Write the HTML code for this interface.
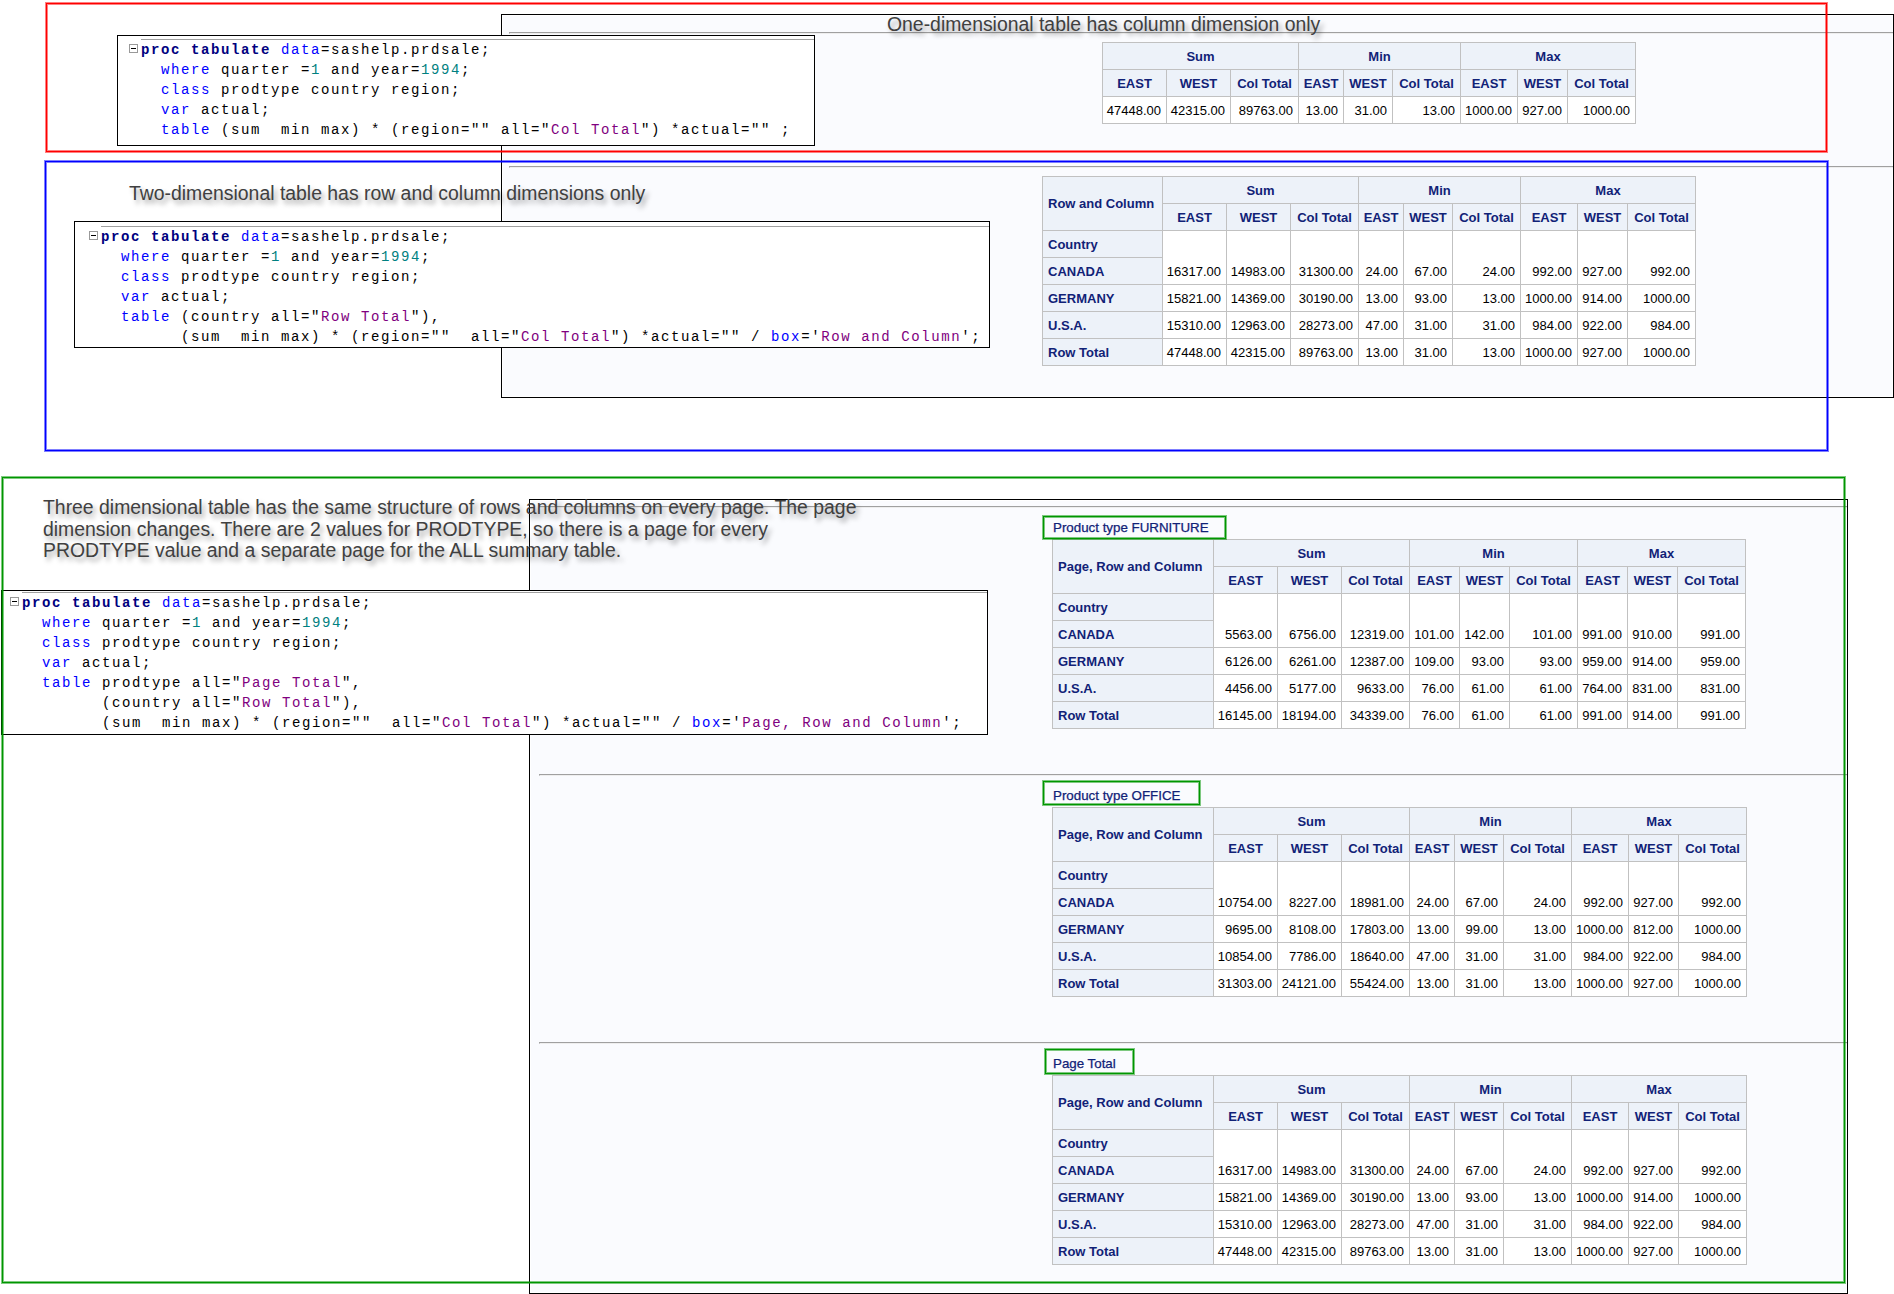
<!DOCTYPE html><html><head><meta charset="utf-8"><style>html,body{margin:0;padding:0;background:#fff;}body{width:1894px;height:1294px;position:relative;overflow:hidden;font-family:"Liberation Sans",sans-serif;font-size:13px;}.win{position:absolute;border:1px solid #000;background:#fafbfe;box-shadow:inset 0 0 0 1px #fff;}.hr{position:absolute;height:0;border-top:1px solid #a0a0a0;border-left:1px solid #a0a0a0;border-bottom:1px solid #eeeeee;}.callout{position:absolute;font-family:"Liberation Sans",sans-serif;font-size:19.4px;color:#404040;white-space:pre;text-shadow:3px 4px 5px rgba(0,0,0,0.38);line-height:21.5px;z-index:20}</style></head><body>
<div class="win" style="left:501px;top:14px;width:1391px;height:382px;z-index:1"></div>
<div class="hr" style="left:509px;top:32px;width:1383px;z-index:2"></div>
<div class="hr" style="left:509px;top:166px;width:1383px;z-index:2"></div>
<div class="callout" style="left:887px;top:12px;line-height:24px">One-dimensional table has column dimension only</div>
<div style="position:absolute;left:1102px;top:42px;width:197px;height:28px;box-sizing:border-box;border:1px solid #c1c1c1;background:#edf2f9;color:#112277;font-weight:bold;display:flex;justify-content:center;align-items:center;z-index:3"><span style="white-space:pre">Sum</span></div>
<div style="position:absolute;left:1102px;top:69px;width:65px;height:28px;box-sizing:border-box;border:1px solid #c1c1c1;background:#edf2f9;color:#112277;font-weight:bold;display:flex;justify-content:center;align-items:center;z-index:3"><span style="white-space:pre">EAST</span></div>
<div style="position:absolute;left:1166px;top:69px;width:65px;height:28px;box-sizing:border-box;border:1px solid #c1c1c1;background:#edf2f9;color:#112277;font-weight:bold;display:flex;justify-content:center;align-items:center;z-index:3"><span style="white-space:pre">WEST</span></div>
<div style="position:absolute;left:1230px;top:69px;width:69px;height:28px;box-sizing:border-box;border:1px solid #c1c1c1;background:#edf2f9;color:#112277;font-weight:bold;display:flex;justify-content:center;align-items:center;z-index:3"><span style="white-space:pre">Col Total</span></div>
<div style="position:absolute;left:1298px;top:42px;width:163px;height:28px;box-sizing:border-box;border:1px solid #c1c1c1;background:#edf2f9;color:#112277;font-weight:bold;display:flex;justify-content:center;align-items:center;z-index:3"><span style="white-space:pre">Min</span></div>
<div style="position:absolute;left:1298px;top:69px;width:46px;height:28px;box-sizing:border-box;border:1px solid #c1c1c1;background:#edf2f9;color:#112277;font-weight:bold;display:flex;justify-content:center;align-items:center;z-index:3"><span style="white-space:pre">EAST</span></div>
<div style="position:absolute;left:1343px;top:69px;width:50px;height:28px;box-sizing:border-box;border:1px solid #c1c1c1;background:#edf2f9;color:#112277;font-weight:bold;display:flex;justify-content:center;align-items:center;z-index:3"><span style="white-space:pre">WEST</span></div>
<div style="position:absolute;left:1392px;top:69px;width:69px;height:28px;box-sizing:border-box;border:1px solid #c1c1c1;background:#edf2f9;color:#112277;font-weight:bold;display:flex;justify-content:center;align-items:center;z-index:3"><span style="white-space:pre">Col Total</span></div>
<div style="position:absolute;left:1460px;top:42px;width:176px;height:28px;box-sizing:border-box;border:1px solid #c1c1c1;background:#edf2f9;color:#112277;font-weight:bold;display:flex;justify-content:center;align-items:center;z-index:3"><span style="white-space:pre">Max</span></div>
<div style="position:absolute;left:1460px;top:69px;width:58px;height:28px;box-sizing:border-box;border:1px solid #c1c1c1;background:#edf2f9;color:#112277;font-weight:bold;display:flex;justify-content:center;align-items:center;z-index:3"><span style="white-space:pre">EAST</span></div>
<div style="position:absolute;left:1517px;top:69px;width:51px;height:28px;box-sizing:border-box;border:1px solid #c1c1c1;background:#edf2f9;color:#112277;font-weight:bold;display:flex;justify-content:center;align-items:center;z-index:3"><span style="white-space:pre">WEST</span></div>
<div style="position:absolute;left:1567px;top:69px;width:69px;height:28px;box-sizing:border-box;border:1px solid #c1c1c1;background:#edf2f9;color:#112277;font-weight:bold;display:flex;justify-content:center;align-items:center;z-index:3"><span style="white-space:pre">Col Total</span></div>
<div style="position:absolute;left:1102px;top:96px;width:65px;height:28px;box-sizing:border-box;border:1px solid #c1c1c1;background:#ffffff;color:#000000;font-weight:normal;display:flex;justify-content:flex-end;align-items:center;padding-right:5px;z-index:3"><span style="white-space:pre">47448.00</span></div>
<div style="position:absolute;left:1166px;top:96px;width:65px;height:28px;box-sizing:border-box;border:1px solid #c1c1c1;background:#ffffff;color:#000000;font-weight:normal;display:flex;justify-content:flex-end;align-items:center;padding-right:5px;z-index:3"><span style="white-space:pre">42315.00</span></div>
<div style="position:absolute;left:1230px;top:96px;width:69px;height:28px;box-sizing:border-box;border:1px solid #c1c1c1;background:#ffffff;color:#000000;font-weight:normal;display:flex;justify-content:flex-end;align-items:center;padding-right:5px;z-index:3"><span style="white-space:pre">89763.00</span></div>
<div style="position:absolute;left:1298px;top:96px;width:46px;height:28px;box-sizing:border-box;border:1px solid #c1c1c1;background:#ffffff;color:#000000;font-weight:normal;display:flex;justify-content:flex-end;align-items:center;padding-right:5px;z-index:3"><span style="white-space:pre">13.00</span></div>
<div style="position:absolute;left:1343px;top:96px;width:50px;height:28px;box-sizing:border-box;border:1px solid #c1c1c1;background:#ffffff;color:#000000;font-weight:normal;display:flex;justify-content:flex-end;align-items:center;padding-right:5px;z-index:3"><span style="white-space:pre">31.00</span></div>
<div style="position:absolute;left:1392px;top:96px;width:69px;height:28px;box-sizing:border-box;border:1px solid #c1c1c1;background:#ffffff;color:#000000;font-weight:normal;display:flex;justify-content:flex-end;align-items:center;padding-right:5px;z-index:3"><span style="white-space:pre">13.00</span></div>
<div style="position:absolute;left:1460px;top:96px;width:58px;height:28px;box-sizing:border-box;border:1px solid #c1c1c1;background:#ffffff;color:#000000;font-weight:normal;display:flex;justify-content:flex-end;align-items:center;padding-right:5px;z-index:3"><span style="white-space:pre">1000.00</span></div>
<div style="position:absolute;left:1517px;top:96px;width:51px;height:28px;box-sizing:border-box;border:1px solid #c1c1c1;background:#ffffff;color:#000000;font-weight:normal;display:flex;justify-content:flex-end;align-items:center;padding-right:5px;z-index:3"><span style="white-space:pre">927.00</span></div>
<div style="position:absolute;left:1567px;top:96px;width:69px;height:28px;box-sizing:border-box;border:1px solid #c1c1c1;background:#ffffff;color:#000000;font-weight:normal;display:flex;justify-content:flex-end;align-items:center;padding-right:5px;z-index:3"><span style="white-space:pre">1000.00</span></div>
<div style="position:absolute;left:1042px;top:176px;width:121px;height:55px;box-sizing:border-box;border:1px solid #c1c1c1;background:#edf2f9;color:#112277;font-weight:bold;display:flex;justify-content:flex-start;align-items:center;padding-left:5px;z-index:3"><span style="white-space:pre">Row and Column</span></div>
<div style="position:absolute;left:1162px;top:176px;width:197px;height:28px;box-sizing:border-box;border:1px solid #c1c1c1;background:#edf2f9;color:#112277;font-weight:bold;display:flex;justify-content:center;align-items:center;z-index:3"><span style="white-space:pre">Sum</span></div>
<div style="position:absolute;left:1162px;top:203px;width:65px;height:28px;box-sizing:border-box;border:1px solid #c1c1c1;background:#edf2f9;color:#112277;font-weight:bold;display:flex;justify-content:center;align-items:center;z-index:3"><span style="white-space:pre">EAST</span></div>
<div style="position:absolute;left:1226px;top:203px;width:65px;height:28px;box-sizing:border-box;border:1px solid #c1c1c1;background:#edf2f9;color:#112277;font-weight:bold;display:flex;justify-content:center;align-items:center;z-index:3"><span style="white-space:pre">WEST</span></div>
<div style="position:absolute;left:1290px;top:203px;width:69px;height:28px;box-sizing:border-box;border:1px solid #c1c1c1;background:#edf2f9;color:#112277;font-weight:bold;display:flex;justify-content:center;align-items:center;z-index:3"><span style="white-space:pre">Col Total</span></div>
<div style="position:absolute;left:1358px;top:176px;width:163px;height:28px;box-sizing:border-box;border:1px solid #c1c1c1;background:#edf2f9;color:#112277;font-weight:bold;display:flex;justify-content:center;align-items:center;z-index:3"><span style="white-space:pre">Min</span></div>
<div style="position:absolute;left:1358px;top:203px;width:46px;height:28px;box-sizing:border-box;border:1px solid #c1c1c1;background:#edf2f9;color:#112277;font-weight:bold;display:flex;justify-content:center;align-items:center;z-index:3"><span style="white-space:pre">EAST</span></div>
<div style="position:absolute;left:1403px;top:203px;width:50px;height:28px;box-sizing:border-box;border:1px solid #c1c1c1;background:#edf2f9;color:#112277;font-weight:bold;display:flex;justify-content:center;align-items:center;z-index:3"><span style="white-space:pre">WEST</span></div>
<div style="position:absolute;left:1452px;top:203px;width:69px;height:28px;box-sizing:border-box;border:1px solid #c1c1c1;background:#edf2f9;color:#112277;font-weight:bold;display:flex;justify-content:center;align-items:center;z-index:3"><span style="white-space:pre">Col Total</span></div>
<div style="position:absolute;left:1520px;top:176px;width:176px;height:28px;box-sizing:border-box;border:1px solid #c1c1c1;background:#edf2f9;color:#112277;font-weight:bold;display:flex;justify-content:center;align-items:center;z-index:3"><span style="white-space:pre">Max</span></div>
<div style="position:absolute;left:1520px;top:203px;width:58px;height:28px;box-sizing:border-box;border:1px solid #c1c1c1;background:#edf2f9;color:#112277;font-weight:bold;display:flex;justify-content:center;align-items:center;z-index:3"><span style="white-space:pre">EAST</span></div>
<div style="position:absolute;left:1577px;top:203px;width:51px;height:28px;box-sizing:border-box;border:1px solid #c1c1c1;background:#edf2f9;color:#112277;font-weight:bold;display:flex;justify-content:center;align-items:center;z-index:3"><span style="white-space:pre">WEST</span></div>
<div style="position:absolute;left:1627px;top:203px;width:69px;height:28px;box-sizing:border-box;border:1px solid #c1c1c1;background:#edf2f9;color:#112277;font-weight:bold;display:flex;justify-content:center;align-items:center;z-index:3"><span style="white-space:pre">Col Total</span></div>
<div style="position:absolute;left:1042px;top:230px;width:121px;height:28px;box-sizing:border-box;border:1px solid #c1c1c1;background:#edf2f9;color:#112277;font-weight:bold;display:flex;justify-content:flex-start;align-items:center;padding-left:5px;z-index:3"><span style="white-space:pre">Country</span></div>
<div style="position:absolute;left:1042px;top:257px;width:121px;height:28px;box-sizing:border-box;border:1px solid #c1c1c1;background:#edf2f9;color:#112277;font-weight:bold;display:flex;justify-content:flex-start;align-items:center;padding-left:5px;z-index:3"><span style="white-space:pre">CANADA</span></div>
<div style="position:absolute;left:1042px;top:284px;width:121px;height:28px;box-sizing:border-box;border:1px solid #c1c1c1;background:#edf2f9;color:#112277;font-weight:bold;display:flex;justify-content:flex-start;align-items:center;padding-left:5px;z-index:3"><span style="white-space:pre">GERMANY</span></div>
<div style="position:absolute;left:1042px;top:311px;width:121px;height:28px;box-sizing:border-box;border:1px solid #c1c1c1;background:#edf2f9;color:#112277;font-weight:bold;display:flex;justify-content:flex-start;align-items:center;padding-left:5px;z-index:3"><span style="white-space:pre">U.S.A.</span></div>
<div style="position:absolute;left:1042px;top:338px;width:121px;height:28px;box-sizing:border-box;border:1px solid #c1c1c1;background:#edf2f9;color:#112277;font-weight:bold;display:flex;justify-content:flex-start;align-items:center;padding-left:5px;z-index:3"><span style="white-space:pre">Row Total</span></div>
<div style="position:absolute;left:1162px;top:230px;width:65px;height:55px;box-sizing:border-box;border:1px solid #c1c1c1;background:#ffffff;color:#000000;font-weight:normal;display:flex;justify-content:flex-end;align-items:flex-end;padding-bottom:5px;padding-right:5px;z-index:3"><span style="white-space:pre">16317.00</span></div>
<div style="position:absolute;left:1226px;top:230px;width:65px;height:55px;box-sizing:border-box;border:1px solid #c1c1c1;background:#ffffff;color:#000000;font-weight:normal;display:flex;justify-content:flex-end;align-items:flex-end;padding-bottom:5px;padding-right:5px;z-index:3"><span style="white-space:pre">14983.00</span></div>
<div style="position:absolute;left:1290px;top:230px;width:69px;height:55px;box-sizing:border-box;border:1px solid #c1c1c1;background:#ffffff;color:#000000;font-weight:normal;display:flex;justify-content:flex-end;align-items:flex-end;padding-bottom:5px;padding-right:5px;z-index:3"><span style="white-space:pre">31300.00</span></div>
<div style="position:absolute;left:1358px;top:230px;width:46px;height:55px;box-sizing:border-box;border:1px solid #c1c1c1;background:#ffffff;color:#000000;font-weight:normal;display:flex;justify-content:flex-end;align-items:flex-end;padding-bottom:5px;padding-right:5px;z-index:3"><span style="white-space:pre">24.00</span></div>
<div style="position:absolute;left:1403px;top:230px;width:50px;height:55px;box-sizing:border-box;border:1px solid #c1c1c1;background:#ffffff;color:#000000;font-weight:normal;display:flex;justify-content:flex-end;align-items:flex-end;padding-bottom:5px;padding-right:5px;z-index:3"><span style="white-space:pre">67.00</span></div>
<div style="position:absolute;left:1452px;top:230px;width:69px;height:55px;box-sizing:border-box;border:1px solid #c1c1c1;background:#ffffff;color:#000000;font-weight:normal;display:flex;justify-content:flex-end;align-items:flex-end;padding-bottom:5px;padding-right:5px;z-index:3"><span style="white-space:pre">24.00</span></div>
<div style="position:absolute;left:1520px;top:230px;width:58px;height:55px;box-sizing:border-box;border:1px solid #c1c1c1;background:#ffffff;color:#000000;font-weight:normal;display:flex;justify-content:flex-end;align-items:flex-end;padding-bottom:5px;padding-right:5px;z-index:3"><span style="white-space:pre">992.00</span></div>
<div style="position:absolute;left:1577px;top:230px;width:51px;height:55px;box-sizing:border-box;border:1px solid #c1c1c1;background:#ffffff;color:#000000;font-weight:normal;display:flex;justify-content:flex-end;align-items:flex-end;padding-bottom:5px;padding-right:5px;z-index:3"><span style="white-space:pre">927.00</span></div>
<div style="position:absolute;left:1627px;top:230px;width:69px;height:55px;box-sizing:border-box;border:1px solid #c1c1c1;background:#ffffff;color:#000000;font-weight:normal;display:flex;justify-content:flex-end;align-items:flex-end;padding-bottom:5px;padding-right:5px;z-index:3"><span style="white-space:pre">992.00</span></div>
<div style="position:absolute;left:1162px;top:284px;width:65px;height:28px;box-sizing:border-box;border:1px solid #c1c1c1;background:#ffffff;color:#000000;font-weight:normal;display:flex;justify-content:flex-end;align-items:center;padding-right:5px;z-index:3"><span style="white-space:pre">15821.00</span></div>
<div style="position:absolute;left:1226px;top:284px;width:65px;height:28px;box-sizing:border-box;border:1px solid #c1c1c1;background:#ffffff;color:#000000;font-weight:normal;display:flex;justify-content:flex-end;align-items:center;padding-right:5px;z-index:3"><span style="white-space:pre">14369.00</span></div>
<div style="position:absolute;left:1290px;top:284px;width:69px;height:28px;box-sizing:border-box;border:1px solid #c1c1c1;background:#ffffff;color:#000000;font-weight:normal;display:flex;justify-content:flex-end;align-items:center;padding-right:5px;z-index:3"><span style="white-space:pre">30190.00</span></div>
<div style="position:absolute;left:1358px;top:284px;width:46px;height:28px;box-sizing:border-box;border:1px solid #c1c1c1;background:#ffffff;color:#000000;font-weight:normal;display:flex;justify-content:flex-end;align-items:center;padding-right:5px;z-index:3"><span style="white-space:pre">13.00</span></div>
<div style="position:absolute;left:1403px;top:284px;width:50px;height:28px;box-sizing:border-box;border:1px solid #c1c1c1;background:#ffffff;color:#000000;font-weight:normal;display:flex;justify-content:flex-end;align-items:center;padding-right:5px;z-index:3"><span style="white-space:pre">93.00</span></div>
<div style="position:absolute;left:1452px;top:284px;width:69px;height:28px;box-sizing:border-box;border:1px solid #c1c1c1;background:#ffffff;color:#000000;font-weight:normal;display:flex;justify-content:flex-end;align-items:center;padding-right:5px;z-index:3"><span style="white-space:pre">13.00</span></div>
<div style="position:absolute;left:1520px;top:284px;width:58px;height:28px;box-sizing:border-box;border:1px solid #c1c1c1;background:#ffffff;color:#000000;font-weight:normal;display:flex;justify-content:flex-end;align-items:center;padding-right:5px;z-index:3"><span style="white-space:pre">1000.00</span></div>
<div style="position:absolute;left:1577px;top:284px;width:51px;height:28px;box-sizing:border-box;border:1px solid #c1c1c1;background:#ffffff;color:#000000;font-weight:normal;display:flex;justify-content:flex-end;align-items:center;padding-right:5px;z-index:3"><span style="white-space:pre">914.00</span></div>
<div style="position:absolute;left:1627px;top:284px;width:69px;height:28px;box-sizing:border-box;border:1px solid #c1c1c1;background:#ffffff;color:#000000;font-weight:normal;display:flex;justify-content:flex-end;align-items:center;padding-right:5px;z-index:3"><span style="white-space:pre">1000.00</span></div>
<div style="position:absolute;left:1162px;top:311px;width:65px;height:28px;box-sizing:border-box;border:1px solid #c1c1c1;background:#ffffff;color:#000000;font-weight:normal;display:flex;justify-content:flex-end;align-items:center;padding-right:5px;z-index:3"><span style="white-space:pre">15310.00</span></div>
<div style="position:absolute;left:1226px;top:311px;width:65px;height:28px;box-sizing:border-box;border:1px solid #c1c1c1;background:#ffffff;color:#000000;font-weight:normal;display:flex;justify-content:flex-end;align-items:center;padding-right:5px;z-index:3"><span style="white-space:pre">12963.00</span></div>
<div style="position:absolute;left:1290px;top:311px;width:69px;height:28px;box-sizing:border-box;border:1px solid #c1c1c1;background:#ffffff;color:#000000;font-weight:normal;display:flex;justify-content:flex-end;align-items:center;padding-right:5px;z-index:3"><span style="white-space:pre">28273.00</span></div>
<div style="position:absolute;left:1358px;top:311px;width:46px;height:28px;box-sizing:border-box;border:1px solid #c1c1c1;background:#ffffff;color:#000000;font-weight:normal;display:flex;justify-content:flex-end;align-items:center;padding-right:5px;z-index:3"><span style="white-space:pre">47.00</span></div>
<div style="position:absolute;left:1403px;top:311px;width:50px;height:28px;box-sizing:border-box;border:1px solid #c1c1c1;background:#ffffff;color:#000000;font-weight:normal;display:flex;justify-content:flex-end;align-items:center;padding-right:5px;z-index:3"><span style="white-space:pre">31.00</span></div>
<div style="position:absolute;left:1452px;top:311px;width:69px;height:28px;box-sizing:border-box;border:1px solid #c1c1c1;background:#ffffff;color:#000000;font-weight:normal;display:flex;justify-content:flex-end;align-items:center;padding-right:5px;z-index:3"><span style="white-space:pre">31.00</span></div>
<div style="position:absolute;left:1520px;top:311px;width:58px;height:28px;box-sizing:border-box;border:1px solid #c1c1c1;background:#ffffff;color:#000000;font-weight:normal;display:flex;justify-content:flex-end;align-items:center;padding-right:5px;z-index:3"><span style="white-space:pre">984.00</span></div>
<div style="position:absolute;left:1577px;top:311px;width:51px;height:28px;box-sizing:border-box;border:1px solid #c1c1c1;background:#ffffff;color:#000000;font-weight:normal;display:flex;justify-content:flex-end;align-items:center;padding-right:5px;z-index:3"><span style="white-space:pre">922.00</span></div>
<div style="position:absolute;left:1627px;top:311px;width:69px;height:28px;box-sizing:border-box;border:1px solid #c1c1c1;background:#ffffff;color:#000000;font-weight:normal;display:flex;justify-content:flex-end;align-items:center;padding-right:5px;z-index:3"><span style="white-space:pre">984.00</span></div>
<div style="position:absolute;left:1162px;top:338px;width:65px;height:28px;box-sizing:border-box;border:1px solid #c1c1c1;background:#ffffff;color:#000000;font-weight:normal;display:flex;justify-content:flex-end;align-items:center;padding-right:5px;z-index:3"><span style="white-space:pre">47448.00</span></div>
<div style="position:absolute;left:1226px;top:338px;width:65px;height:28px;box-sizing:border-box;border:1px solid #c1c1c1;background:#ffffff;color:#000000;font-weight:normal;display:flex;justify-content:flex-end;align-items:center;padding-right:5px;z-index:3"><span style="white-space:pre">42315.00</span></div>
<div style="position:absolute;left:1290px;top:338px;width:69px;height:28px;box-sizing:border-box;border:1px solid #c1c1c1;background:#ffffff;color:#000000;font-weight:normal;display:flex;justify-content:flex-end;align-items:center;padding-right:5px;z-index:3"><span style="white-space:pre">89763.00</span></div>
<div style="position:absolute;left:1358px;top:338px;width:46px;height:28px;box-sizing:border-box;border:1px solid #c1c1c1;background:#ffffff;color:#000000;font-weight:normal;display:flex;justify-content:flex-end;align-items:center;padding-right:5px;z-index:3"><span style="white-space:pre">13.00</span></div>
<div style="position:absolute;left:1403px;top:338px;width:50px;height:28px;box-sizing:border-box;border:1px solid #c1c1c1;background:#ffffff;color:#000000;font-weight:normal;display:flex;justify-content:flex-end;align-items:center;padding-right:5px;z-index:3"><span style="white-space:pre">31.00</span></div>
<div style="position:absolute;left:1452px;top:338px;width:69px;height:28px;box-sizing:border-box;border:1px solid #c1c1c1;background:#ffffff;color:#000000;font-weight:normal;display:flex;justify-content:flex-end;align-items:center;padding-right:5px;z-index:3"><span style="white-space:pre">13.00</span></div>
<div style="position:absolute;left:1520px;top:338px;width:58px;height:28px;box-sizing:border-box;border:1px solid #c1c1c1;background:#ffffff;color:#000000;font-weight:normal;display:flex;justify-content:flex-end;align-items:center;padding-right:5px;z-index:3"><span style="white-space:pre">1000.00</span></div>
<div style="position:absolute;left:1577px;top:338px;width:51px;height:28px;box-sizing:border-box;border:1px solid #c1c1c1;background:#ffffff;color:#000000;font-weight:normal;display:flex;justify-content:flex-end;align-items:center;padding-right:5px;z-index:3"><span style="white-space:pre">927.00</span></div>
<div style="position:absolute;left:1627px;top:338px;width:69px;height:28px;box-sizing:border-box;border:1px solid #c1c1c1;background:#ffffff;color:#000000;font-weight:normal;display:flex;justify-content:flex-end;align-items:center;padding-right:5px;z-index:3"><span style="white-space:pre">1000.00</span></div>
<div style="position:absolute;left:46px;top:3px;width:1779px;height:147px;border:1px solid rgb(255,0,0);box-shadow:0 0 0 1px rgba(255,0,0,0.5),inset 0 0 0 1px rgba(255,0,0,0.5);z-index:10"></div>
<div style="position:absolute;left:117px;top:35px;width:696px;height:109px;border:1px solid #000;background:#fff;z-index:12;overflow:hidden">
<div style="position:absolute;left:23px;top:3px;right:0;height:1px;background:#a0a0a0"></div>
<div style="position:absolute;left:11px;top:8px;width:7px;height:7px;border:1px solid #999;background:#fff"></div>
<div style="position:absolute;left:13px;top:12px;width:5px;height:1px;background:#000"></div>
<div style="position:absolute;left:23px;top:4.40px;height:20px;line-height:20px;white-space:pre;font-family:'Liberation Mono',monospace;font-size:14px;letter-spacing:1.6px;color:#000"><span style="color:#000080;font-weight:bold">proc tabulate</span> <span style="color:#0000ff">data</span>=sashelp.prdsale;</div>
<div style="position:absolute;left:23px;top:24.40px;height:20px;line-height:20px;white-space:pre;font-family:'Liberation Mono',monospace;font-size:14px;letter-spacing:1.6px;color:#000">  <span style="color:#0000ff">where</span> quarter =<span style="color:#008080">1</span> and year=<span style="color:#008080">1994</span>;</div>
<div style="position:absolute;left:23px;top:44.40px;height:20px;line-height:20px;white-space:pre;font-family:'Liberation Mono',monospace;font-size:14px;letter-spacing:1.6px;color:#000">  <span style="color:#0000ff">class</span> prodtype country region;</div>
<div style="position:absolute;left:23px;top:64.40px;height:20px;line-height:20px;white-space:pre;font-family:'Liberation Mono',monospace;font-size:14px;letter-spacing:1.6px;color:#000">  <span style="color:#0000ff">var</span> actual;</div>
<div style="position:absolute;left:23px;top:84.40px;height:20px;line-height:20px;white-space:pre;font-family:'Liberation Mono',monospace;font-size:14px;letter-spacing:1.6px;color:#000">  <span style="color:#0000ff">table</span> (sum  min max) * (region="" all="<span style="color:#800080">Col Total</span>") *actual="" ;</div>
</div>
<div style="position:absolute;left:45px;top:161px;width:1781px;height:288px;border:1px solid rgb(0,0,255);box-shadow:0 0 0 1px rgba(0,0,255,0.5),inset 0 0 0 1px rgba(0,0,255,0.5);z-index:10"></div>
<div class="callout" style="left:129px;top:181px;line-height:24px">Two-dimensional table has row and column dimensions only</div>
<div style="position:absolute;left:74px;top:221px;width:914px;height:125px;border:1px solid #000;background:#fff;z-index:12;overflow:hidden">
<div style="position:absolute;left:26px;top:4px;right:0;height:1px;background:#a0a0a0"></div>
<div style="position:absolute;left:14px;top:9px;width:7px;height:7px;border:1px solid #999;background:#fff"></div>
<div style="position:absolute;left:16px;top:13px;width:5px;height:1px;background:#000"></div>
<div style="position:absolute;left:26px;top:5.40px;height:20px;line-height:20px;white-space:pre;font-family:'Liberation Mono',monospace;font-size:14px;letter-spacing:1.6px;color:#000"><span style="color:#000080;font-weight:bold">proc tabulate</span> <span style="color:#0000ff">data</span>=sashelp.prdsale;</div>
<div style="position:absolute;left:26px;top:25.40px;height:20px;line-height:20px;white-space:pre;font-family:'Liberation Mono',monospace;font-size:14px;letter-spacing:1.6px;color:#000">  <span style="color:#0000ff">where</span> quarter =<span style="color:#008080">1</span> and year=<span style="color:#008080">1994</span>;</div>
<div style="position:absolute;left:26px;top:45.40px;height:20px;line-height:20px;white-space:pre;font-family:'Liberation Mono',monospace;font-size:14px;letter-spacing:1.6px;color:#000">  <span style="color:#0000ff">class</span> prodtype country region;</div>
<div style="position:absolute;left:26px;top:65.40px;height:20px;line-height:20px;white-space:pre;font-family:'Liberation Mono',monospace;font-size:14px;letter-spacing:1.6px;color:#000">  <span style="color:#0000ff">var</span> actual;</div>
<div style="position:absolute;left:26px;top:85.40px;height:20px;line-height:20px;white-space:pre;font-family:'Liberation Mono',monospace;font-size:14px;letter-spacing:1.6px;color:#000">  <span style="color:#0000ff">table</span> (country all="<span style="color:#800080">Row Total</span>"),</div>
<div style="position:absolute;left:26px;top:105.40px;height:20px;line-height:20px;white-space:pre;font-family:'Liberation Mono',monospace;font-size:14px;letter-spacing:1.6px;color:#000">        (sum  min max) * (region=""  all="<span style="color:#800080">Col Total</span>") *actual="" / <span style="color:#0000ff">box</span>='<span style="color:#800080">Row and Column</span>';</div>
</div>
<div class="win" style="left:529px;top:499px;width:1317px;height:793px;z-index:1"></div>
<div class="hr" style="left:539px;top:506px;width:1307px;z-index:2"></div>
<div class="hr" style="left:539px;top:774px;width:1307px;z-index:2"></div>
<div class="hr" style="left:539px;top:1042px;width:1307px;z-index:2"></div>
<div style="position:absolute;left:2px;top:477px;width:1841px;height:804px;border:1px solid rgb(0,150,0);box-shadow:0 0 0 1px rgba(0,150,0,0.5),inset 0 0 0 1px rgba(0,150,0,0.5);z-index:15"></div>
<div class="callout" style="left:43px;top:497px;">Three dimensional table has the same structure of rows and columns on every page. The page
dimension changes. There are 2 values for PRODTYPE, so there is a page for every
PRODTYPE value and a separate page for the ALL summary table.</div>
<div style="position:absolute;left:1px;top:590px;width:985px;height:143px;border:1px solid #000;background:#fff;z-index:12;overflow:hidden">
<div style="position:absolute;left:20px;top:1px;right:0;height:1px;background:#a0a0a0"></div>
<div style="position:absolute;left:8px;top:6px;width:7px;height:7px;border:1px solid #999;background:#fff"></div>
<div style="position:absolute;left:10px;top:10px;width:5px;height:1px;background:#000"></div>
<div style="position:absolute;left:20px;top:2.40px;height:20px;line-height:20px;white-space:pre;font-family:'Liberation Mono',monospace;font-size:14px;letter-spacing:1.6px;color:#000"><span style="color:#000080;font-weight:bold">proc tabulate</span> <span style="color:#0000ff">data</span>=sashelp.prdsale;</div>
<div style="position:absolute;left:20px;top:22.40px;height:20px;line-height:20px;white-space:pre;font-family:'Liberation Mono',monospace;font-size:14px;letter-spacing:1.6px;color:#000">  <span style="color:#0000ff">where</span> quarter =<span style="color:#008080">1</span> and year=<span style="color:#008080">1994</span>;</div>
<div style="position:absolute;left:20px;top:42.40px;height:20px;line-height:20px;white-space:pre;font-family:'Liberation Mono',monospace;font-size:14px;letter-spacing:1.6px;color:#000">  <span style="color:#0000ff">class</span> prodtype country region;</div>
<div style="position:absolute;left:20px;top:62.40px;height:20px;line-height:20px;white-space:pre;font-family:'Liberation Mono',monospace;font-size:14px;letter-spacing:1.6px;color:#000">  <span style="color:#0000ff">var</span> actual;</div>
<div style="position:absolute;left:20px;top:82.40px;height:20px;line-height:20px;white-space:pre;font-family:'Liberation Mono',monospace;font-size:14px;letter-spacing:1.6px;color:#000">  <span style="color:#0000ff">table</span> prodtype all="<span style="color:#800080">Page Total</span>",</div>
<div style="position:absolute;left:20px;top:102.40px;height:20px;line-height:20px;white-space:pre;font-family:'Liberation Mono',monospace;font-size:14px;letter-spacing:1.6px;color:#000">        (country all="<span style="color:#800080">Row Total</span>"),</div>
<div style="position:absolute;left:20px;top:122.40px;height:20px;line-height:20px;white-space:pre;font-family:'Liberation Mono',monospace;font-size:14px;letter-spacing:1.6px;color:#000">        (sum  min max) * (region=""  all="<span style="color:#800080">Col Total</span>") *actual="" / <span style="color:#0000ff">box</span>='<span style="color:#800080">Page, Row and Column</span>';</div>
</div>
<div style="position:absolute;left:1052px;top:539px;width:162px;height:55px;box-sizing:border-box;border:1px solid #c1c1c1;background:#edf2f9;color:#112277;font-weight:bold;display:flex;justify-content:flex-start;align-items:center;padding-left:5px;z-index:3"><span style="white-space:pre">Page, Row and Column</span></div>
<div style="position:absolute;left:1213px;top:539px;width:197px;height:28px;box-sizing:border-box;border:1px solid #c1c1c1;background:#edf2f9;color:#112277;font-weight:bold;display:flex;justify-content:center;align-items:center;z-index:3"><span style="white-space:pre">Sum</span></div>
<div style="position:absolute;left:1213px;top:566px;width:65px;height:28px;box-sizing:border-box;border:1px solid #c1c1c1;background:#edf2f9;color:#112277;font-weight:bold;display:flex;justify-content:center;align-items:center;z-index:3"><span style="white-space:pre">EAST</span></div>
<div style="position:absolute;left:1277px;top:566px;width:65px;height:28px;box-sizing:border-box;border:1px solid #c1c1c1;background:#edf2f9;color:#112277;font-weight:bold;display:flex;justify-content:center;align-items:center;z-index:3"><span style="white-space:pre">WEST</span></div>
<div style="position:absolute;left:1341px;top:566px;width:69px;height:28px;box-sizing:border-box;border:1px solid #c1c1c1;background:#edf2f9;color:#112277;font-weight:bold;display:flex;justify-content:center;align-items:center;z-index:3"><span style="white-space:pre">Col Total</span></div>
<div style="position:absolute;left:1409px;top:539px;width:169px;height:28px;box-sizing:border-box;border:1px solid #c1c1c1;background:#edf2f9;color:#112277;font-weight:bold;display:flex;justify-content:center;align-items:center;z-index:3"><span style="white-space:pre">Min</span></div>
<div style="position:absolute;left:1409px;top:566px;width:51px;height:28px;box-sizing:border-box;border:1px solid #c1c1c1;background:#edf2f9;color:#112277;font-weight:bold;display:flex;justify-content:center;align-items:center;z-index:3"><span style="white-space:pre">EAST</span></div>
<div style="position:absolute;left:1459px;top:566px;width:51px;height:28px;box-sizing:border-box;border:1px solid #c1c1c1;background:#edf2f9;color:#112277;font-weight:bold;display:flex;justify-content:center;align-items:center;z-index:3"><span style="white-space:pre">WEST</span></div>
<div style="position:absolute;left:1509px;top:566px;width:69px;height:28px;box-sizing:border-box;border:1px solid #c1c1c1;background:#edf2f9;color:#112277;font-weight:bold;display:flex;justify-content:center;align-items:center;z-index:3"><span style="white-space:pre">Col Total</span></div>
<div style="position:absolute;left:1577px;top:539px;width:169px;height:28px;box-sizing:border-box;border:1px solid #c1c1c1;background:#edf2f9;color:#112277;font-weight:bold;display:flex;justify-content:center;align-items:center;z-index:3"><span style="white-space:pre">Max</span></div>
<div style="position:absolute;left:1577px;top:566px;width:51px;height:28px;box-sizing:border-box;border:1px solid #c1c1c1;background:#edf2f9;color:#112277;font-weight:bold;display:flex;justify-content:center;align-items:center;z-index:3"><span style="white-space:pre">EAST</span></div>
<div style="position:absolute;left:1627px;top:566px;width:51px;height:28px;box-sizing:border-box;border:1px solid #c1c1c1;background:#edf2f9;color:#112277;font-weight:bold;display:flex;justify-content:center;align-items:center;z-index:3"><span style="white-space:pre">WEST</span></div>
<div style="position:absolute;left:1677px;top:566px;width:69px;height:28px;box-sizing:border-box;border:1px solid #c1c1c1;background:#edf2f9;color:#112277;font-weight:bold;display:flex;justify-content:center;align-items:center;z-index:3"><span style="white-space:pre">Col Total</span></div>
<div style="position:absolute;left:1052px;top:593px;width:162px;height:28px;box-sizing:border-box;border:1px solid #c1c1c1;background:#edf2f9;color:#112277;font-weight:bold;display:flex;justify-content:flex-start;align-items:center;padding-left:5px;z-index:3"><span style="white-space:pre">Country</span></div>
<div style="position:absolute;left:1052px;top:620px;width:162px;height:28px;box-sizing:border-box;border:1px solid #c1c1c1;background:#edf2f9;color:#112277;font-weight:bold;display:flex;justify-content:flex-start;align-items:center;padding-left:5px;z-index:3"><span style="white-space:pre">CANADA</span></div>
<div style="position:absolute;left:1052px;top:647px;width:162px;height:28px;box-sizing:border-box;border:1px solid #c1c1c1;background:#edf2f9;color:#112277;font-weight:bold;display:flex;justify-content:flex-start;align-items:center;padding-left:5px;z-index:3"><span style="white-space:pre">GERMANY</span></div>
<div style="position:absolute;left:1052px;top:674px;width:162px;height:28px;box-sizing:border-box;border:1px solid #c1c1c1;background:#edf2f9;color:#112277;font-weight:bold;display:flex;justify-content:flex-start;align-items:center;padding-left:5px;z-index:3"><span style="white-space:pre">U.S.A.</span></div>
<div style="position:absolute;left:1052px;top:701px;width:162px;height:28px;box-sizing:border-box;border:1px solid #c1c1c1;background:#edf2f9;color:#112277;font-weight:bold;display:flex;justify-content:flex-start;align-items:center;padding-left:5px;z-index:3"><span style="white-space:pre">Row Total</span></div>
<div style="position:absolute;left:1213px;top:593px;width:65px;height:55px;box-sizing:border-box;border:1px solid #c1c1c1;background:#ffffff;color:#000000;font-weight:normal;display:flex;justify-content:flex-end;align-items:flex-end;padding-bottom:5px;padding-right:5px;z-index:3"><span style="white-space:pre">5563.00</span></div>
<div style="position:absolute;left:1277px;top:593px;width:65px;height:55px;box-sizing:border-box;border:1px solid #c1c1c1;background:#ffffff;color:#000000;font-weight:normal;display:flex;justify-content:flex-end;align-items:flex-end;padding-bottom:5px;padding-right:5px;z-index:3"><span style="white-space:pre">6756.00</span></div>
<div style="position:absolute;left:1341px;top:593px;width:69px;height:55px;box-sizing:border-box;border:1px solid #c1c1c1;background:#ffffff;color:#000000;font-weight:normal;display:flex;justify-content:flex-end;align-items:flex-end;padding-bottom:5px;padding-right:5px;z-index:3"><span style="white-space:pre">12319.00</span></div>
<div style="position:absolute;left:1409px;top:593px;width:51px;height:55px;box-sizing:border-box;border:1px solid #c1c1c1;background:#ffffff;color:#000000;font-weight:normal;display:flex;justify-content:flex-end;align-items:flex-end;padding-bottom:5px;padding-right:5px;z-index:3"><span style="white-space:pre">101.00</span></div>
<div style="position:absolute;left:1459px;top:593px;width:51px;height:55px;box-sizing:border-box;border:1px solid #c1c1c1;background:#ffffff;color:#000000;font-weight:normal;display:flex;justify-content:flex-end;align-items:flex-end;padding-bottom:5px;padding-right:5px;z-index:3"><span style="white-space:pre">142.00</span></div>
<div style="position:absolute;left:1509px;top:593px;width:69px;height:55px;box-sizing:border-box;border:1px solid #c1c1c1;background:#ffffff;color:#000000;font-weight:normal;display:flex;justify-content:flex-end;align-items:flex-end;padding-bottom:5px;padding-right:5px;z-index:3"><span style="white-space:pre">101.00</span></div>
<div style="position:absolute;left:1577px;top:593px;width:51px;height:55px;box-sizing:border-box;border:1px solid #c1c1c1;background:#ffffff;color:#000000;font-weight:normal;display:flex;justify-content:flex-end;align-items:flex-end;padding-bottom:5px;padding-right:5px;z-index:3"><span style="white-space:pre">991.00</span></div>
<div style="position:absolute;left:1627px;top:593px;width:51px;height:55px;box-sizing:border-box;border:1px solid #c1c1c1;background:#ffffff;color:#000000;font-weight:normal;display:flex;justify-content:flex-end;align-items:flex-end;padding-bottom:5px;padding-right:5px;z-index:3"><span style="white-space:pre">910.00</span></div>
<div style="position:absolute;left:1677px;top:593px;width:69px;height:55px;box-sizing:border-box;border:1px solid #c1c1c1;background:#ffffff;color:#000000;font-weight:normal;display:flex;justify-content:flex-end;align-items:flex-end;padding-bottom:5px;padding-right:5px;z-index:3"><span style="white-space:pre">991.00</span></div>
<div style="position:absolute;left:1213px;top:647px;width:65px;height:28px;box-sizing:border-box;border:1px solid #c1c1c1;background:#ffffff;color:#000000;font-weight:normal;display:flex;justify-content:flex-end;align-items:center;padding-right:5px;z-index:3"><span style="white-space:pre">6126.00</span></div>
<div style="position:absolute;left:1277px;top:647px;width:65px;height:28px;box-sizing:border-box;border:1px solid #c1c1c1;background:#ffffff;color:#000000;font-weight:normal;display:flex;justify-content:flex-end;align-items:center;padding-right:5px;z-index:3"><span style="white-space:pre">6261.00</span></div>
<div style="position:absolute;left:1341px;top:647px;width:69px;height:28px;box-sizing:border-box;border:1px solid #c1c1c1;background:#ffffff;color:#000000;font-weight:normal;display:flex;justify-content:flex-end;align-items:center;padding-right:5px;z-index:3"><span style="white-space:pre">12387.00</span></div>
<div style="position:absolute;left:1409px;top:647px;width:51px;height:28px;box-sizing:border-box;border:1px solid #c1c1c1;background:#ffffff;color:#000000;font-weight:normal;display:flex;justify-content:flex-end;align-items:center;padding-right:5px;z-index:3"><span style="white-space:pre">109.00</span></div>
<div style="position:absolute;left:1459px;top:647px;width:51px;height:28px;box-sizing:border-box;border:1px solid #c1c1c1;background:#ffffff;color:#000000;font-weight:normal;display:flex;justify-content:flex-end;align-items:center;padding-right:5px;z-index:3"><span style="white-space:pre">93.00</span></div>
<div style="position:absolute;left:1509px;top:647px;width:69px;height:28px;box-sizing:border-box;border:1px solid #c1c1c1;background:#ffffff;color:#000000;font-weight:normal;display:flex;justify-content:flex-end;align-items:center;padding-right:5px;z-index:3"><span style="white-space:pre">93.00</span></div>
<div style="position:absolute;left:1577px;top:647px;width:51px;height:28px;box-sizing:border-box;border:1px solid #c1c1c1;background:#ffffff;color:#000000;font-weight:normal;display:flex;justify-content:flex-end;align-items:center;padding-right:5px;z-index:3"><span style="white-space:pre">959.00</span></div>
<div style="position:absolute;left:1627px;top:647px;width:51px;height:28px;box-sizing:border-box;border:1px solid #c1c1c1;background:#ffffff;color:#000000;font-weight:normal;display:flex;justify-content:flex-end;align-items:center;padding-right:5px;z-index:3"><span style="white-space:pre">914.00</span></div>
<div style="position:absolute;left:1677px;top:647px;width:69px;height:28px;box-sizing:border-box;border:1px solid #c1c1c1;background:#ffffff;color:#000000;font-weight:normal;display:flex;justify-content:flex-end;align-items:center;padding-right:5px;z-index:3"><span style="white-space:pre">959.00</span></div>
<div style="position:absolute;left:1213px;top:674px;width:65px;height:28px;box-sizing:border-box;border:1px solid #c1c1c1;background:#ffffff;color:#000000;font-weight:normal;display:flex;justify-content:flex-end;align-items:center;padding-right:5px;z-index:3"><span style="white-space:pre">4456.00</span></div>
<div style="position:absolute;left:1277px;top:674px;width:65px;height:28px;box-sizing:border-box;border:1px solid #c1c1c1;background:#ffffff;color:#000000;font-weight:normal;display:flex;justify-content:flex-end;align-items:center;padding-right:5px;z-index:3"><span style="white-space:pre">5177.00</span></div>
<div style="position:absolute;left:1341px;top:674px;width:69px;height:28px;box-sizing:border-box;border:1px solid #c1c1c1;background:#ffffff;color:#000000;font-weight:normal;display:flex;justify-content:flex-end;align-items:center;padding-right:5px;z-index:3"><span style="white-space:pre">9633.00</span></div>
<div style="position:absolute;left:1409px;top:674px;width:51px;height:28px;box-sizing:border-box;border:1px solid #c1c1c1;background:#ffffff;color:#000000;font-weight:normal;display:flex;justify-content:flex-end;align-items:center;padding-right:5px;z-index:3"><span style="white-space:pre">76.00</span></div>
<div style="position:absolute;left:1459px;top:674px;width:51px;height:28px;box-sizing:border-box;border:1px solid #c1c1c1;background:#ffffff;color:#000000;font-weight:normal;display:flex;justify-content:flex-end;align-items:center;padding-right:5px;z-index:3"><span style="white-space:pre">61.00</span></div>
<div style="position:absolute;left:1509px;top:674px;width:69px;height:28px;box-sizing:border-box;border:1px solid #c1c1c1;background:#ffffff;color:#000000;font-weight:normal;display:flex;justify-content:flex-end;align-items:center;padding-right:5px;z-index:3"><span style="white-space:pre">61.00</span></div>
<div style="position:absolute;left:1577px;top:674px;width:51px;height:28px;box-sizing:border-box;border:1px solid #c1c1c1;background:#ffffff;color:#000000;font-weight:normal;display:flex;justify-content:flex-end;align-items:center;padding-right:5px;z-index:3"><span style="white-space:pre">764.00</span></div>
<div style="position:absolute;left:1627px;top:674px;width:51px;height:28px;box-sizing:border-box;border:1px solid #c1c1c1;background:#ffffff;color:#000000;font-weight:normal;display:flex;justify-content:flex-end;align-items:center;padding-right:5px;z-index:3"><span style="white-space:pre">831.00</span></div>
<div style="position:absolute;left:1677px;top:674px;width:69px;height:28px;box-sizing:border-box;border:1px solid #c1c1c1;background:#ffffff;color:#000000;font-weight:normal;display:flex;justify-content:flex-end;align-items:center;padding-right:5px;z-index:3"><span style="white-space:pre">831.00</span></div>
<div style="position:absolute;left:1213px;top:701px;width:65px;height:28px;box-sizing:border-box;border:1px solid #c1c1c1;background:#ffffff;color:#000000;font-weight:normal;display:flex;justify-content:flex-end;align-items:center;padding-right:5px;z-index:3"><span style="white-space:pre">16145.00</span></div>
<div style="position:absolute;left:1277px;top:701px;width:65px;height:28px;box-sizing:border-box;border:1px solid #c1c1c1;background:#ffffff;color:#000000;font-weight:normal;display:flex;justify-content:flex-end;align-items:center;padding-right:5px;z-index:3"><span style="white-space:pre">18194.00</span></div>
<div style="position:absolute;left:1341px;top:701px;width:69px;height:28px;box-sizing:border-box;border:1px solid #c1c1c1;background:#ffffff;color:#000000;font-weight:normal;display:flex;justify-content:flex-end;align-items:center;padding-right:5px;z-index:3"><span style="white-space:pre">34339.00</span></div>
<div style="position:absolute;left:1409px;top:701px;width:51px;height:28px;box-sizing:border-box;border:1px solid #c1c1c1;background:#ffffff;color:#000000;font-weight:normal;display:flex;justify-content:flex-end;align-items:center;padding-right:5px;z-index:3"><span style="white-space:pre">76.00</span></div>
<div style="position:absolute;left:1459px;top:701px;width:51px;height:28px;box-sizing:border-box;border:1px solid #c1c1c1;background:#ffffff;color:#000000;font-weight:normal;display:flex;justify-content:flex-end;align-items:center;padding-right:5px;z-index:3"><span style="white-space:pre">61.00</span></div>
<div style="position:absolute;left:1509px;top:701px;width:69px;height:28px;box-sizing:border-box;border:1px solid #c1c1c1;background:#ffffff;color:#000000;font-weight:normal;display:flex;justify-content:flex-end;align-items:center;padding-right:5px;z-index:3"><span style="white-space:pre">61.00</span></div>
<div style="position:absolute;left:1577px;top:701px;width:51px;height:28px;box-sizing:border-box;border:1px solid #c1c1c1;background:#ffffff;color:#000000;font-weight:normal;display:flex;justify-content:flex-end;align-items:center;padding-right:5px;z-index:3"><span style="white-space:pre">991.00</span></div>
<div style="position:absolute;left:1627px;top:701px;width:51px;height:28px;box-sizing:border-box;border:1px solid #c1c1c1;background:#ffffff;color:#000000;font-weight:normal;display:flex;justify-content:flex-end;align-items:center;padding-right:5px;z-index:3"><span style="white-space:pre">914.00</span></div>
<div style="position:absolute;left:1677px;top:701px;width:69px;height:28px;box-sizing:border-box;border:1px solid #c1c1c1;background:#ffffff;color:#000000;font-weight:normal;display:flex;justify-content:flex-end;align-items:center;padding-right:5px;z-index:3"><span style="white-space:pre">991.00</span></div>
<div style="position:absolute;left:1052px;top:807px;width:162px;height:55px;box-sizing:border-box;border:1px solid #c1c1c1;background:#edf2f9;color:#112277;font-weight:bold;display:flex;justify-content:flex-start;align-items:center;padding-left:5px;z-index:3"><span style="white-space:pre">Page, Row and Column</span></div>
<div style="position:absolute;left:1213px;top:807px;width:197px;height:28px;box-sizing:border-box;border:1px solid #c1c1c1;background:#edf2f9;color:#112277;font-weight:bold;display:flex;justify-content:center;align-items:center;z-index:3"><span style="white-space:pre">Sum</span></div>
<div style="position:absolute;left:1213px;top:834px;width:65px;height:28px;box-sizing:border-box;border:1px solid #c1c1c1;background:#edf2f9;color:#112277;font-weight:bold;display:flex;justify-content:center;align-items:center;z-index:3"><span style="white-space:pre">EAST</span></div>
<div style="position:absolute;left:1277px;top:834px;width:65px;height:28px;box-sizing:border-box;border:1px solid #c1c1c1;background:#edf2f9;color:#112277;font-weight:bold;display:flex;justify-content:center;align-items:center;z-index:3"><span style="white-space:pre">WEST</span></div>
<div style="position:absolute;left:1341px;top:834px;width:69px;height:28px;box-sizing:border-box;border:1px solid #c1c1c1;background:#edf2f9;color:#112277;font-weight:bold;display:flex;justify-content:center;align-items:center;z-index:3"><span style="white-space:pre">Col Total</span></div>
<div style="position:absolute;left:1409px;top:807px;width:163px;height:28px;box-sizing:border-box;border:1px solid #c1c1c1;background:#edf2f9;color:#112277;font-weight:bold;display:flex;justify-content:center;align-items:center;z-index:3"><span style="white-space:pre">Min</span></div>
<div style="position:absolute;left:1409px;top:834px;width:46px;height:28px;box-sizing:border-box;border:1px solid #c1c1c1;background:#edf2f9;color:#112277;font-weight:bold;display:flex;justify-content:center;align-items:center;z-index:3"><span style="white-space:pre">EAST</span></div>
<div style="position:absolute;left:1454px;top:834px;width:50px;height:28px;box-sizing:border-box;border:1px solid #c1c1c1;background:#edf2f9;color:#112277;font-weight:bold;display:flex;justify-content:center;align-items:center;z-index:3"><span style="white-space:pre">WEST</span></div>
<div style="position:absolute;left:1503px;top:834px;width:69px;height:28px;box-sizing:border-box;border:1px solid #c1c1c1;background:#edf2f9;color:#112277;font-weight:bold;display:flex;justify-content:center;align-items:center;z-index:3"><span style="white-space:pre">Col Total</span></div>
<div style="position:absolute;left:1571px;top:807px;width:176px;height:28px;box-sizing:border-box;border:1px solid #c1c1c1;background:#edf2f9;color:#112277;font-weight:bold;display:flex;justify-content:center;align-items:center;z-index:3"><span style="white-space:pre">Max</span></div>
<div style="position:absolute;left:1571px;top:834px;width:58px;height:28px;box-sizing:border-box;border:1px solid #c1c1c1;background:#edf2f9;color:#112277;font-weight:bold;display:flex;justify-content:center;align-items:center;z-index:3"><span style="white-space:pre">EAST</span></div>
<div style="position:absolute;left:1628px;top:834px;width:51px;height:28px;box-sizing:border-box;border:1px solid #c1c1c1;background:#edf2f9;color:#112277;font-weight:bold;display:flex;justify-content:center;align-items:center;z-index:3"><span style="white-space:pre">WEST</span></div>
<div style="position:absolute;left:1678px;top:834px;width:69px;height:28px;box-sizing:border-box;border:1px solid #c1c1c1;background:#edf2f9;color:#112277;font-weight:bold;display:flex;justify-content:center;align-items:center;z-index:3"><span style="white-space:pre">Col Total</span></div>
<div style="position:absolute;left:1052px;top:861px;width:162px;height:28px;box-sizing:border-box;border:1px solid #c1c1c1;background:#edf2f9;color:#112277;font-weight:bold;display:flex;justify-content:flex-start;align-items:center;padding-left:5px;z-index:3"><span style="white-space:pre">Country</span></div>
<div style="position:absolute;left:1052px;top:888px;width:162px;height:28px;box-sizing:border-box;border:1px solid #c1c1c1;background:#edf2f9;color:#112277;font-weight:bold;display:flex;justify-content:flex-start;align-items:center;padding-left:5px;z-index:3"><span style="white-space:pre">CANADA</span></div>
<div style="position:absolute;left:1052px;top:915px;width:162px;height:28px;box-sizing:border-box;border:1px solid #c1c1c1;background:#edf2f9;color:#112277;font-weight:bold;display:flex;justify-content:flex-start;align-items:center;padding-left:5px;z-index:3"><span style="white-space:pre">GERMANY</span></div>
<div style="position:absolute;left:1052px;top:942px;width:162px;height:28px;box-sizing:border-box;border:1px solid #c1c1c1;background:#edf2f9;color:#112277;font-weight:bold;display:flex;justify-content:flex-start;align-items:center;padding-left:5px;z-index:3"><span style="white-space:pre">U.S.A.</span></div>
<div style="position:absolute;left:1052px;top:969px;width:162px;height:28px;box-sizing:border-box;border:1px solid #c1c1c1;background:#edf2f9;color:#112277;font-weight:bold;display:flex;justify-content:flex-start;align-items:center;padding-left:5px;z-index:3"><span style="white-space:pre">Row Total</span></div>
<div style="position:absolute;left:1213px;top:861px;width:65px;height:55px;box-sizing:border-box;border:1px solid #c1c1c1;background:#ffffff;color:#000000;font-weight:normal;display:flex;justify-content:flex-end;align-items:flex-end;padding-bottom:5px;padding-right:5px;z-index:3"><span style="white-space:pre">10754.00</span></div>
<div style="position:absolute;left:1277px;top:861px;width:65px;height:55px;box-sizing:border-box;border:1px solid #c1c1c1;background:#ffffff;color:#000000;font-weight:normal;display:flex;justify-content:flex-end;align-items:flex-end;padding-bottom:5px;padding-right:5px;z-index:3"><span style="white-space:pre">8227.00</span></div>
<div style="position:absolute;left:1341px;top:861px;width:69px;height:55px;box-sizing:border-box;border:1px solid #c1c1c1;background:#ffffff;color:#000000;font-weight:normal;display:flex;justify-content:flex-end;align-items:flex-end;padding-bottom:5px;padding-right:5px;z-index:3"><span style="white-space:pre">18981.00</span></div>
<div style="position:absolute;left:1409px;top:861px;width:46px;height:55px;box-sizing:border-box;border:1px solid #c1c1c1;background:#ffffff;color:#000000;font-weight:normal;display:flex;justify-content:flex-end;align-items:flex-end;padding-bottom:5px;padding-right:5px;z-index:3"><span style="white-space:pre">24.00</span></div>
<div style="position:absolute;left:1454px;top:861px;width:50px;height:55px;box-sizing:border-box;border:1px solid #c1c1c1;background:#ffffff;color:#000000;font-weight:normal;display:flex;justify-content:flex-end;align-items:flex-end;padding-bottom:5px;padding-right:5px;z-index:3"><span style="white-space:pre">67.00</span></div>
<div style="position:absolute;left:1503px;top:861px;width:69px;height:55px;box-sizing:border-box;border:1px solid #c1c1c1;background:#ffffff;color:#000000;font-weight:normal;display:flex;justify-content:flex-end;align-items:flex-end;padding-bottom:5px;padding-right:5px;z-index:3"><span style="white-space:pre">24.00</span></div>
<div style="position:absolute;left:1571px;top:861px;width:58px;height:55px;box-sizing:border-box;border:1px solid #c1c1c1;background:#ffffff;color:#000000;font-weight:normal;display:flex;justify-content:flex-end;align-items:flex-end;padding-bottom:5px;padding-right:5px;z-index:3"><span style="white-space:pre">992.00</span></div>
<div style="position:absolute;left:1628px;top:861px;width:51px;height:55px;box-sizing:border-box;border:1px solid #c1c1c1;background:#ffffff;color:#000000;font-weight:normal;display:flex;justify-content:flex-end;align-items:flex-end;padding-bottom:5px;padding-right:5px;z-index:3"><span style="white-space:pre">927.00</span></div>
<div style="position:absolute;left:1678px;top:861px;width:69px;height:55px;box-sizing:border-box;border:1px solid #c1c1c1;background:#ffffff;color:#000000;font-weight:normal;display:flex;justify-content:flex-end;align-items:flex-end;padding-bottom:5px;padding-right:5px;z-index:3"><span style="white-space:pre">992.00</span></div>
<div style="position:absolute;left:1213px;top:915px;width:65px;height:28px;box-sizing:border-box;border:1px solid #c1c1c1;background:#ffffff;color:#000000;font-weight:normal;display:flex;justify-content:flex-end;align-items:center;padding-right:5px;z-index:3"><span style="white-space:pre">9695.00</span></div>
<div style="position:absolute;left:1277px;top:915px;width:65px;height:28px;box-sizing:border-box;border:1px solid #c1c1c1;background:#ffffff;color:#000000;font-weight:normal;display:flex;justify-content:flex-end;align-items:center;padding-right:5px;z-index:3"><span style="white-space:pre">8108.00</span></div>
<div style="position:absolute;left:1341px;top:915px;width:69px;height:28px;box-sizing:border-box;border:1px solid #c1c1c1;background:#ffffff;color:#000000;font-weight:normal;display:flex;justify-content:flex-end;align-items:center;padding-right:5px;z-index:3"><span style="white-space:pre">17803.00</span></div>
<div style="position:absolute;left:1409px;top:915px;width:46px;height:28px;box-sizing:border-box;border:1px solid #c1c1c1;background:#ffffff;color:#000000;font-weight:normal;display:flex;justify-content:flex-end;align-items:center;padding-right:5px;z-index:3"><span style="white-space:pre">13.00</span></div>
<div style="position:absolute;left:1454px;top:915px;width:50px;height:28px;box-sizing:border-box;border:1px solid #c1c1c1;background:#ffffff;color:#000000;font-weight:normal;display:flex;justify-content:flex-end;align-items:center;padding-right:5px;z-index:3"><span style="white-space:pre">99.00</span></div>
<div style="position:absolute;left:1503px;top:915px;width:69px;height:28px;box-sizing:border-box;border:1px solid #c1c1c1;background:#ffffff;color:#000000;font-weight:normal;display:flex;justify-content:flex-end;align-items:center;padding-right:5px;z-index:3"><span style="white-space:pre">13.00</span></div>
<div style="position:absolute;left:1571px;top:915px;width:58px;height:28px;box-sizing:border-box;border:1px solid #c1c1c1;background:#ffffff;color:#000000;font-weight:normal;display:flex;justify-content:flex-end;align-items:center;padding-right:5px;z-index:3"><span style="white-space:pre">1000.00</span></div>
<div style="position:absolute;left:1628px;top:915px;width:51px;height:28px;box-sizing:border-box;border:1px solid #c1c1c1;background:#ffffff;color:#000000;font-weight:normal;display:flex;justify-content:flex-end;align-items:center;padding-right:5px;z-index:3"><span style="white-space:pre">812.00</span></div>
<div style="position:absolute;left:1678px;top:915px;width:69px;height:28px;box-sizing:border-box;border:1px solid #c1c1c1;background:#ffffff;color:#000000;font-weight:normal;display:flex;justify-content:flex-end;align-items:center;padding-right:5px;z-index:3"><span style="white-space:pre">1000.00</span></div>
<div style="position:absolute;left:1213px;top:942px;width:65px;height:28px;box-sizing:border-box;border:1px solid #c1c1c1;background:#ffffff;color:#000000;font-weight:normal;display:flex;justify-content:flex-end;align-items:center;padding-right:5px;z-index:3"><span style="white-space:pre">10854.00</span></div>
<div style="position:absolute;left:1277px;top:942px;width:65px;height:28px;box-sizing:border-box;border:1px solid #c1c1c1;background:#ffffff;color:#000000;font-weight:normal;display:flex;justify-content:flex-end;align-items:center;padding-right:5px;z-index:3"><span style="white-space:pre">7786.00</span></div>
<div style="position:absolute;left:1341px;top:942px;width:69px;height:28px;box-sizing:border-box;border:1px solid #c1c1c1;background:#ffffff;color:#000000;font-weight:normal;display:flex;justify-content:flex-end;align-items:center;padding-right:5px;z-index:3"><span style="white-space:pre">18640.00</span></div>
<div style="position:absolute;left:1409px;top:942px;width:46px;height:28px;box-sizing:border-box;border:1px solid #c1c1c1;background:#ffffff;color:#000000;font-weight:normal;display:flex;justify-content:flex-end;align-items:center;padding-right:5px;z-index:3"><span style="white-space:pre">47.00</span></div>
<div style="position:absolute;left:1454px;top:942px;width:50px;height:28px;box-sizing:border-box;border:1px solid #c1c1c1;background:#ffffff;color:#000000;font-weight:normal;display:flex;justify-content:flex-end;align-items:center;padding-right:5px;z-index:3"><span style="white-space:pre">31.00</span></div>
<div style="position:absolute;left:1503px;top:942px;width:69px;height:28px;box-sizing:border-box;border:1px solid #c1c1c1;background:#ffffff;color:#000000;font-weight:normal;display:flex;justify-content:flex-end;align-items:center;padding-right:5px;z-index:3"><span style="white-space:pre">31.00</span></div>
<div style="position:absolute;left:1571px;top:942px;width:58px;height:28px;box-sizing:border-box;border:1px solid #c1c1c1;background:#ffffff;color:#000000;font-weight:normal;display:flex;justify-content:flex-end;align-items:center;padding-right:5px;z-index:3"><span style="white-space:pre">984.00</span></div>
<div style="position:absolute;left:1628px;top:942px;width:51px;height:28px;box-sizing:border-box;border:1px solid #c1c1c1;background:#ffffff;color:#000000;font-weight:normal;display:flex;justify-content:flex-end;align-items:center;padding-right:5px;z-index:3"><span style="white-space:pre">922.00</span></div>
<div style="position:absolute;left:1678px;top:942px;width:69px;height:28px;box-sizing:border-box;border:1px solid #c1c1c1;background:#ffffff;color:#000000;font-weight:normal;display:flex;justify-content:flex-end;align-items:center;padding-right:5px;z-index:3"><span style="white-space:pre">984.00</span></div>
<div style="position:absolute;left:1213px;top:969px;width:65px;height:28px;box-sizing:border-box;border:1px solid #c1c1c1;background:#ffffff;color:#000000;font-weight:normal;display:flex;justify-content:flex-end;align-items:center;padding-right:5px;z-index:3"><span style="white-space:pre">31303.00</span></div>
<div style="position:absolute;left:1277px;top:969px;width:65px;height:28px;box-sizing:border-box;border:1px solid #c1c1c1;background:#ffffff;color:#000000;font-weight:normal;display:flex;justify-content:flex-end;align-items:center;padding-right:5px;z-index:3"><span style="white-space:pre">24121.00</span></div>
<div style="position:absolute;left:1341px;top:969px;width:69px;height:28px;box-sizing:border-box;border:1px solid #c1c1c1;background:#ffffff;color:#000000;font-weight:normal;display:flex;justify-content:flex-end;align-items:center;padding-right:5px;z-index:3"><span style="white-space:pre">55424.00</span></div>
<div style="position:absolute;left:1409px;top:969px;width:46px;height:28px;box-sizing:border-box;border:1px solid #c1c1c1;background:#ffffff;color:#000000;font-weight:normal;display:flex;justify-content:flex-end;align-items:center;padding-right:5px;z-index:3"><span style="white-space:pre">13.00</span></div>
<div style="position:absolute;left:1454px;top:969px;width:50px;height:28px;box-sizing:border-box;border:1px solid #c1c1c1;background:#ffffff;color:#000000;font-weight:normal;display:flex;justify-content:flex-end;align-items:center;padding-right:5px;z-index:3"><span style="white-space:pre">31.00</span></div>
<div style="position:absolute;left:1503px;top:969px;width:69px;height:28px;box-sizing:border-box;border:1px solid #c1c1c1;background:#ffffff;color:#000000;font-weight:normal;display:flex;justify-content:flex-end;align-items:center;padding-right:5px;z-index:3"><span style="white-space:pre">13.00</span></div>
<div style="position:absolute;left:1571px;top:969px;width:58px;height:28px;box-sizing:border-box;border:1px solid #c1c1c1;background:#ffffff;color:#000000;font-weight:normal;display:flex;justify-content:flex-end;align-items:center;padding-right:5px;z-index:3"><span style="white-space:pre">1000.00</span></div>
<div style="position:absolute;left:1628px;top:969px;width:51px;height:28px;box-sizing:border-box;border:1px solid #c1c1c1;background:#ffffff;color:#000000;font-weight:normal;display:flex;justify-content:flex-end;align-items:center;padding-right:5px;z-index:3"><span style="white-space:pre">927.00</span></div>
<div style="position:absolute;left:1678px;top:969px;width:69px;height:28px;box-sizing:border-box;border:1px solid #c1c1c1;background:#ffffff;color:#000000;font-weight:normal;display:flex;justify-content:flex-end;align-items:center;padding-right:5px;z-index:3"><span style="white-space:pre">1000.00</span></div>
<div style="position:absolute;left:1052px;top:1075px;width:162px;height:55px;box-sizing:border-box;border:1px solid #c1c1c1;background:#edf2f9;color:#112277;font-weight:bold;display:flex;justify-content:flex-start;align-items:center;padding-left:5px;z-index:3"><span style="white-space:pre">Page, Row and Column</span></div>
<div style="position:absolute;left:1213px;top:1075px;width:197px;height:28px;box-sizing:border-box;border:1px solid #c1c1c1;background:#edf2f9;color:#112277;font-weight:bold;display:flex;justify-content:center;align-items:center;z-index:3"><span style="white-space:pre">Sum</span></div>
<div style="position:absolute;left:1213px;top:1102px;width:65px;height:28px;box-sizing:border-box;border:1px solid #c1c1c1;background:#edf2f9;color:#112277;font-weight:bold;display:flex;justify-content:center;align-items:center;z-index:3"><span style="white-space:pre">EAST</span></div>
<div style="position:absolute;left:1277px;top:1102px;width:65px;height:28px;box-sizing:border-box;border:1px solid #c1c1c1;background:#edf2f9;color:#112277;font-weight:bold;display:flex;justify-content:center;align-items:center;z-index:3"><span style="white-space:pre">WEST</span></div>
<div style="position:absolute;left:1341px;top:1102px;width:69px;height:28px;box-sizing:border-box;border:1px solid #c1c1c1;background:#edf2f9;color:#112277;font-weight:bold;display:flex;justify-content:center;align-items:center;z-index:3"><span style="white-space:pre">Col Total</span></div>
<div style="position:absolute;left:1409px;top:1075px;width:163px;height:28px;box-sizing:border-box;border:1px solid #c1c1c1;background:#edf2f9;color:#112277;font-weight:bold;display:flex;justify-content:center;align-items:center;z-index:3"><span style="white-space:pre">Min</span></div>
<div style="position:absolute;left:1409px;top:1102px;width:46px;height:28px;box-sizing:border-box;border:1px solid #c1c1c1;background:#edf2f9;color:#112277;font-weight:bold;display:flex;justify-content:center;align-items:center;z-index:3"><span style="white-space:pre">EAST</span></div>
<div style="position:absolute;left:1454px;top:1102px;width:50px;height:28px;box-sizing:border-box;border:1px solid #c1c1c1;background:#edf2f9;color:#112277;font-weight:bold;display:flex;justify-content:center;align-items:center;z-index:3"><span style="white-space:pre">WEST</span></div>
<div style="position:absolute;left:1503px;top:1102px;width:69px;height:28px;box-sizing:border-box;border:1px solid #c1c1c1;background:#edf2f9;color:#112277;font-weight:bold;display:flex;justify-content:center;align-items:center;z-index:3"><span style="white-space:pre">Col Total</span></div>
<div style="position:absolute;left:1571px;top:1075px;width:176px;height:28px;box-sizing:border-box;border:1px solid #c1c1c1;background:#edf2f9;color:#112277;font-weight:bold;display:flex;justify-content:center;align-items:center;z-index:3"><span style="white-space:pre">Max</span></div>
<div style="position:absolute;left:1571px;top:1102px;width:58px;height:28px;box-sizing:border-box;border:1px solid #c1c1c1;background:#edf2f9;color:#112277;font-weight:bold;display:flex;justify-content:center;align-items:center;z-index:3"><span style="white-space:pre">EAST</span></div>
<div style="position:absolute;left:1628px;top:1102px;width:51px;height:28px;box-sizing:border-box;border:1px solid #c1c1c1;background:#edf2f9;color:#112277;font-weight:bold;display:flex;justify-content:center;align-items:center;z-index:3"><span style="white-space:pre">WEST</span></div>
<div style="position:absolute;left:1678px;top:1102px;width:69px;height:28px;box-sizing:border-box;border:1px solid #c1c1c1;background:#edf2f9;color:#112277;font-weight:bold;display:flex;justify-content:center;align-items:center;z-index:3"><span style="white-space:pre">Col Total</span></div>
<div style="position:absolute;left:1052px;top:1129px;width:162px;height:28px;box-sizing:border-box;border:1px solid #c1c1c1;background:#edf2f9;color:#112277;font-weight:bold;display:flex;justify-content:flex-start;align-items:center;padding-left:5px;z-index:3"><span style="white-space:pre">Country</span></div>
<div style="position:absolute;left:1052px;top:1156px;width:162px;height:28px;box-sizing:border-box;border:1px solid #c1c1c1;background:#edf2f9;color:#112277;font-weight:bold;display:flex;justify-content:flex-start;align-items:center;padding-left:5px;z-index:3"><span style="white-space:pre">CANADA</span></div>
<div style="position:absolute;left:1052px;top:1183px;width:162px;height:28px;box-sizing:border-box;border:1px solid #c1c1c1;background:#edf2f9;color:#112277;font-weight:bold;display:flex;justify-content:flex-start;align-items:center;padding-left:5px;z-index:3"><span style="white-space:pre">GERMANY</span></div>
<div style="position:absolute;left:1052px;top:1210px;width:162px;height:28px;box-sizing:border-box;border:1px solid #c1c1c1;background:#edf2f9;color:#112277;font-weight:bold;display:flex;justify-content:flex-start;align-items:center;padding-left:5px;z-index:3"><span style="white-space:pre">U.S.A.</span></div>
<div style="position:absolute;left:1052px;top:1237px;width:162px;height:28px;box-sizing:border-box;border:1px solid #c1c1c1;background:#edf2f9;color:#112277;font-weight:bold;display:flex;justify-content:flex-start;align-items:center;padding-left:5px;z-index:3"><span style="white-space:pre">Row Total</span></div>
<div style="position:absolute;left:1213px;top:1129px;width:65px;height:55px;box-sizing:border-box;border:1px solid #c1c1c1;background:#ffffff;color:#000000;font-weight:normal;display:flex;justify-content:flex-end;align-items:flex-end;padding-bottom:5px;padding-right:5px;z-index:3"><span style="white-space:pre">16317.00</span></div>
<div style="position:absolute;left:1277px;top:1129px;width:65px;height:55px;box-sizing:border-box;border:1px solid #c1c1c1;background:#ffffff;color:#000000;font-weight:normal;display:flex;justify-content:flex-end;align-items:flex-end;padding-bottom:5px;padding-right:5px;z-index:3"><span style="white-space:pre">14983.00</span></div>
<div style="position:absolute;left:1341px;top:1129px;width:69px;height:55px;box-sizing:border-box;border:1px solid #c1c1c1;background:#ffffff;color:#000000;font-weight:normal;display:flex;justify-content:flex-end;align-items:flex-end;padding-bottom:5px;padding-right:5px;z-index:3"><span style="white-space:pre">31300.00</span></div>
<div style="position:absolute;left:1409px;top:1129px;width:46px;height:55px;box-sizing:border-box;border:1px solid #c1c1c1;background:#ffffff;color:#000000;font-weight:normal;display:flex;justify-content:flex-end;align-items:flex-end;padding-bottom:5px;padding-right:5px;z-index:3"><span style="white-space:pre">24.00</span></div>
<div style="position:absolute;left:1454px;top:1129px;width:50px;height:55px;box-sizing:border-box;border:1px solid #c1c1c1;background:#ffffff;color:#000000;font-weight:normal;display:flex;justify-content:flex-end;align-items:flex-end;padding-bottom:5px;padding-right:5px;z-index:3"><span style="white-space:pre">67.00</span></div>
<div style="position:absolute;left:1503px;top:1129px;width:69px;height:55px;box-sizing:border-box;border:1px solid #c1c1c1;background:#ffffff;color:#000000;font-weight:normal;display:flex;justify-content:flex-end;align-items:flex-end;padding-bottom:5px;padding-right:5px;z-index:3"><span style="white-space:pre">24.00</span></div>
<div style="position:absolute;left:1571px;top:1129px;width:58px;height:55px;box-sizing:border-box;border:1px solid #c1c1c1;background:#ffffff;color:#000000;font-weight:normal;display:flex;justify-content:flex-end;align-items:flex-end;padding-bottom:5px;padding-right:5px;z-index:3"><span style="white-space:pre">992.00</span></div>
<div style="position:absolute;left:1628px;top:1129px;width:51px;height:55px;box-sizing:border-box;border:1px solid #c1c1c1;background:#ffffff;color:#000000;font-weight:normal;display:flex;justify-content:flex-end;align-items:flex-end;padding-bottom:5px;padding-right:5px;z-index:3"><span style="white-space:pre">927.00</span></div>
<div style="position:absolute;left:1678px;top:1129px;width:69px;height:55px;box-sizing:border-box;border:1px solid #c1c1c1;background:#ffffff;color:#000000;font-weight:normal;display:flex;justify-content:flex-end;align-items:flex-end;padding-bottom:5px;padding-right:5px;z-index:3"><span style="white-space:pre">992.00</span></div>
<div style="position:absolute;left:1213px;top:1183px;width:65px;height:28px;box-sizing:border-box;border:1px solid #c1c1c1;background:#ffffff;color:#000000;font-weight:normal;display:flex;justify-content:flex-end;align-items:center;padding-right:5px;z-index:3"><span style="white-space:pre">15821.00</span></div>
<div style="position:absolute;left:1277px;top:1183px;width:65px;height:28px;box-sizing:border-box;border:1px solid #c1c1c1;background:#ffffff;color:#000000;font-weight:normal;display:flex;justify-content:flex-end;align-items:center;padding-right:5px;z-index:3"><span style="white-space:pre">14369.00</span></div>
<div style="position:absolute;left:1341px;top:1183px;width:69px;height:28px;box-sizing:border-box;border:1px solid #c1c1c1;background:#ffffff;color:#000000;font-weight:normal;display:flex;justify-content:flex-end;align-items:center;padding-right:5px;z-index:3"><span style="white-space:pre">30190.00</span></div>
<div style="position:absolute;left:1409px;top:1183px;width:46px;height:28px;box-sizing:border-box;border:1px solid #c1c1c1;background:#ffffff;color:#000000;font-weight:normal;display:flex;justify-content:flex-end;align-items:center;padding-right:5px;z-index:3"><span style="white-space:pre">13.00</span></div>
<div style="position:absolute;left:1454px;top:1183px;width:50px;height:28px;box-sizing:border-box;border:1px solid #c1c1c1;background:#ffffff;color:#000000;font-weight:normal;display:flex;justify-content:flex-end;align-items:center;padding-right:5px;z-index:3"><span style="white-space:pre">93.00</span></div>
<div style="position:absolute;left:1503px;top:1183px;width:69px;height:28px;box-sizing:border-box;border:1px solid #c1c1c1;background:#ffffff;color:#000000;font-weight:normal;display:flex;justify-content:flex-end;align-items:center;padding-right:5px;z-index:3"><span style="white-space:pre">13.00</span></div>
<div style="position:absolute;left:1571px;top:1183px;width:58px;height:28px;box-sizing:border-box;border:1px solid #c1c1c1;background:#ffffff;color:#000000;font-weight:normal;display:flex;justify-content:flex-end;align-items:center;padding-right:5px;z-index:3"><span style="white-space:pre">1000.00</span></div>
<div style="position:absolute;left:1628px;top:1183px;width:51px;height:28px;box-sizing:border-box;border:1px solid #c1c1c1;background:#ffffff;color:#000000;font-weight:normal;display:flex;justify-content:flex-end;align-items:center;padding-right:5px;z-index:3"><span style="white-space:pre">914.00</span></div>
<div style="position:absolute;left:1678px;top:1183px;width:69px;height:28px;box-sizing:border-box;border:1px solid #c1c1c1;background:#ffffff;color:#000000;font-weight:normal;display:flex;justify-content:flex-end;align-items:center;padding-right:5px;z-index:3"><span style="white-space:pre">1000.00</span></div>
<div style="position:absolute;left:1213px;top:1210px;width:65px;height:28px;box-sizing:border-box;border:1px solid #c1c1c1;background:#ffffff;color:#000000;font-weight:normal;display:flex;justify-content:flex-end;align-items:center;padding-right:5px;z-index:3"><span style="white-space:pre">15310.00</span></div>
<div style="position:absolute;left:1277px;top:1210px;width:65px;height:28px;box-sizing:border-box;border:1px solid #c1c1c1;background:#ffffff;color:#000000;font-weight:normal;display:flex;justify-content:flex-end;align-items:center;padding-right:5px;z-index:3"><span style="white-space:pre">12963.00</span></div>
<div style="position:absolute;left:1341px;top:1210px;width:69px;height:28px;box-sizing:border-box;border:1px solid #c1c1c1;background:#ffffff;color:#000000;font-weight:normal;display:flex;justify-content:flex-end;align-items:center;padding-right:5px;z-index:3"><span style="white-space:pre">28273.00</span></div>
<div style="position:absolute;left:1409px;top:1210px;width:46px;height:28px;box-sizing:border-box;border:1px solid #c1c1c1;background:#ffffff;color:#000000;font-weight:normal;display:flex;justify-content:flex-end;align-items:center;padding-right:5px;z-index:3"><span style="white-space:pre">47.00</span></div>
<div style="position:absolute;left:1454px;top:1210px;width:50px;height:28px;box-sizing:border-box;border:1px solid #c1c1c1;background:#ffffff;color:#000000;font-weight:normal;display:flex;justify-content:flex-end;align-items:center;padding-right:5px;z-index:3"><span style="white-space:pre">31.00</span></div>
<div style="position:absolute;left:1503px;top:1210px;width:69px;height:28px;box-sizing:border-box;border:1px solid #c1c1c1;background:#ffffff;color:#000000;font-weight:normal;display:flex;justify-content:flex-end;align-items:center;padding-right:5px;z-index:3"><span style="white-space:pre">31.00</span></div>
<div style="position:absolute;left:1571px;top:1210px;width:58px;height:28px;box-sizing:border-box;border:1px solid #c1c1c1;background:#ffffff;color:#000000;font-weight:normal;display:flex;justify-content:flex-end;align-items:center;padding-right:5px;z-index:3"><span style="white-space:pre">984.00</span></div>
<div style="position:absolute;left:1628px;top:1210px;width:51px;height:28px;box-sizing:border-box;border:1px solid #c1c1c1;background:#ffffff;color:#000000;font-weight:normal;display:flex;justify-content:flex-end;align-items:center;padding-right:5px;z-index:3"><span style="white-space:pre">922.00</span></div>
<div style="position:absolute;left:1678px;top:1210px;width:69px;height:28px;box-sizing:border-box;border:1px solid #c1c1c1;background:#ffffff;color:#000000;font-weight:normal;display:flex;justify-content:flex-end;align-items:center;padding-right:5px;z-index:3"><span style="white-space:pre">984.00</span></div>
<div style="position:absolute;left:1213px;top:1237px;width:65px;height:28px;box-sizing:border-box;border:1px solid #c1c1c1;background:#ffffff;color:#000000;font-weight:normal;display:flex;justify-content:flex-end;align-items:center;padding-right:5px;z-index:3"><span style="white-space:pre">47448.00</span></div>
<div style="position:absolute;left:1277px;top:1237px;width:65px;height:28px;box-sizing:border-box;border:1px solid #c1c1c1;background:#ffffff;color:#000000;font-weight:normal;display:flex;justify-content:flex-end;align-items:center;padding-right:5px;z-index:3"><span style="white-space:pre">42315.00</span></div>
<div style="position:absolute;left:1341px;top:1237px;width:69px;height:28px;box-sizing:border-box;border:1px solid #c1c1c1;background:#ffffff;color:#000000;font-weight:normal;display:flex;justify-content:flex-end;align-items:center;padding-right:5px;z-index:3"><span style="white-space:pre">89763.00</span></div>
<div style="position:absolute;left:1409px;top:1237px;width:46px;height:28px;box-sizing:border-box;border:1px solid #c1c1c1;background:#ffffff;color:#000000;font-weight:normal;display:flex;justify-content:flex-end;align-items:center;padding-right:5px;z-index:3"><span style="white-space:pre">13.00</span></div>
<div style="position:absolute;left:1454px;top:1237px;width:50px;height:28px;box-sizing:border-box;border:1px solid #c1c1c1;background:#ffffff;color:#000000;font-weight:normal;display:flex;justify-content:flex-end;align-items:center;padding-right:5px;z-index:3"><span style="white-space:pre">31.00</span></div>
<div style="position:absolute;left:1503px;top:1237px;width:69px;height:28px;box-sizing:border-box;border:1px solid #c1c1c1;background:#ffffff;color:#000000;font-weight:normal;display:flex;justify-content:flex-end;align-items:center;padding-right:5px;z-index:3"><span style="white-space:pre">13.00</span></div>
<div style="position:absolute;left:1571px;top:1237px;width:58px;height:28px;box-sizing:border-box;border:1px solid #c1c1c1;background:#ffffff;color:#000000;font-weight:normal;display:flex;justify-content:flex-end;align-items:center;padding-right:5px;z-index:3"><span style="white-space:pre">1000.00</span></div>
<div style="position:absolute;left:1628px;top:1237px;width:51px;height:28px;box-sizing:border-box;border:1px solid #c1c1c1;background:#ffffff;color:#000000;font-weight:normal;display:flex;justify-content:flex-end;align-items:center;padding-right:5px;z-index:3"><span style="white-space:pre">927.00</span></div>
<div style="position:absolute;left:1678px;top:1237px;width:69px;height:28px;box-sizing:border-box;border:1px solid #c1c1c1;background:#ffffff;color:#000000;font-weight:normal;display:flex;justify-content:flex-end;align-items:center;padding-right:5px;z-index:3"><span style="white-space:pre">1000.00</span></div>
<div style="position:absolute;left:1043px;top:516px;width:181px;height:21px;border:1px solid rgb(0,150,0);box-shadow:0 0 0 1px rgba(0,150,0,0.5),inset 0 0 0 1px rgba(0,150,0,0.5);z-index:16"></div>
<div style="position:absolute;left:1053px;top:519.9px;height:15px;line-height:15px;font-size:13.33px;color:#112277;-webkit-text-stroke:0.25px #112277;white-space:pre;z-index:16">Product type FURNITURE</div>
<div style="position:absolute;left:1043px;top:781px;width:155px;height:22px;border:1px solid rgb(0,150,0);box-shadow:0 0 0 1px rgba(0,150,0,0.5),inset 0 0 0 1px rgba(0,150,0,0.5);z-index:16"></div>
<div style="position:absolute;left:1053px;top:787.9px;height:15px;line-height:15px;font-size:13.33px;color:#112277;-webkit-text-stroke:0.25px #112277;white-space:pre;z-index:16">Product type OFFICE</div>
<div style="position:absolute;left:1045px;top:1049px;width:87px;height:23px;border:1px solid rgb(0,150,0);box-shadow:0 0 0 1px rgba(0,150,0,0.5),inset 0 0 0 1px rgba(0,150,0,0.5);z-index:16"></div>
<div style="position:absolute;left:1053px;top:1055.9px;height:15px;line-height:15px;font-size:13.33px;color:#112277;-webkit-text-stroke:0.25px #112277;white-space:pre;z-index:16">Page Total</div>
</body></html>
